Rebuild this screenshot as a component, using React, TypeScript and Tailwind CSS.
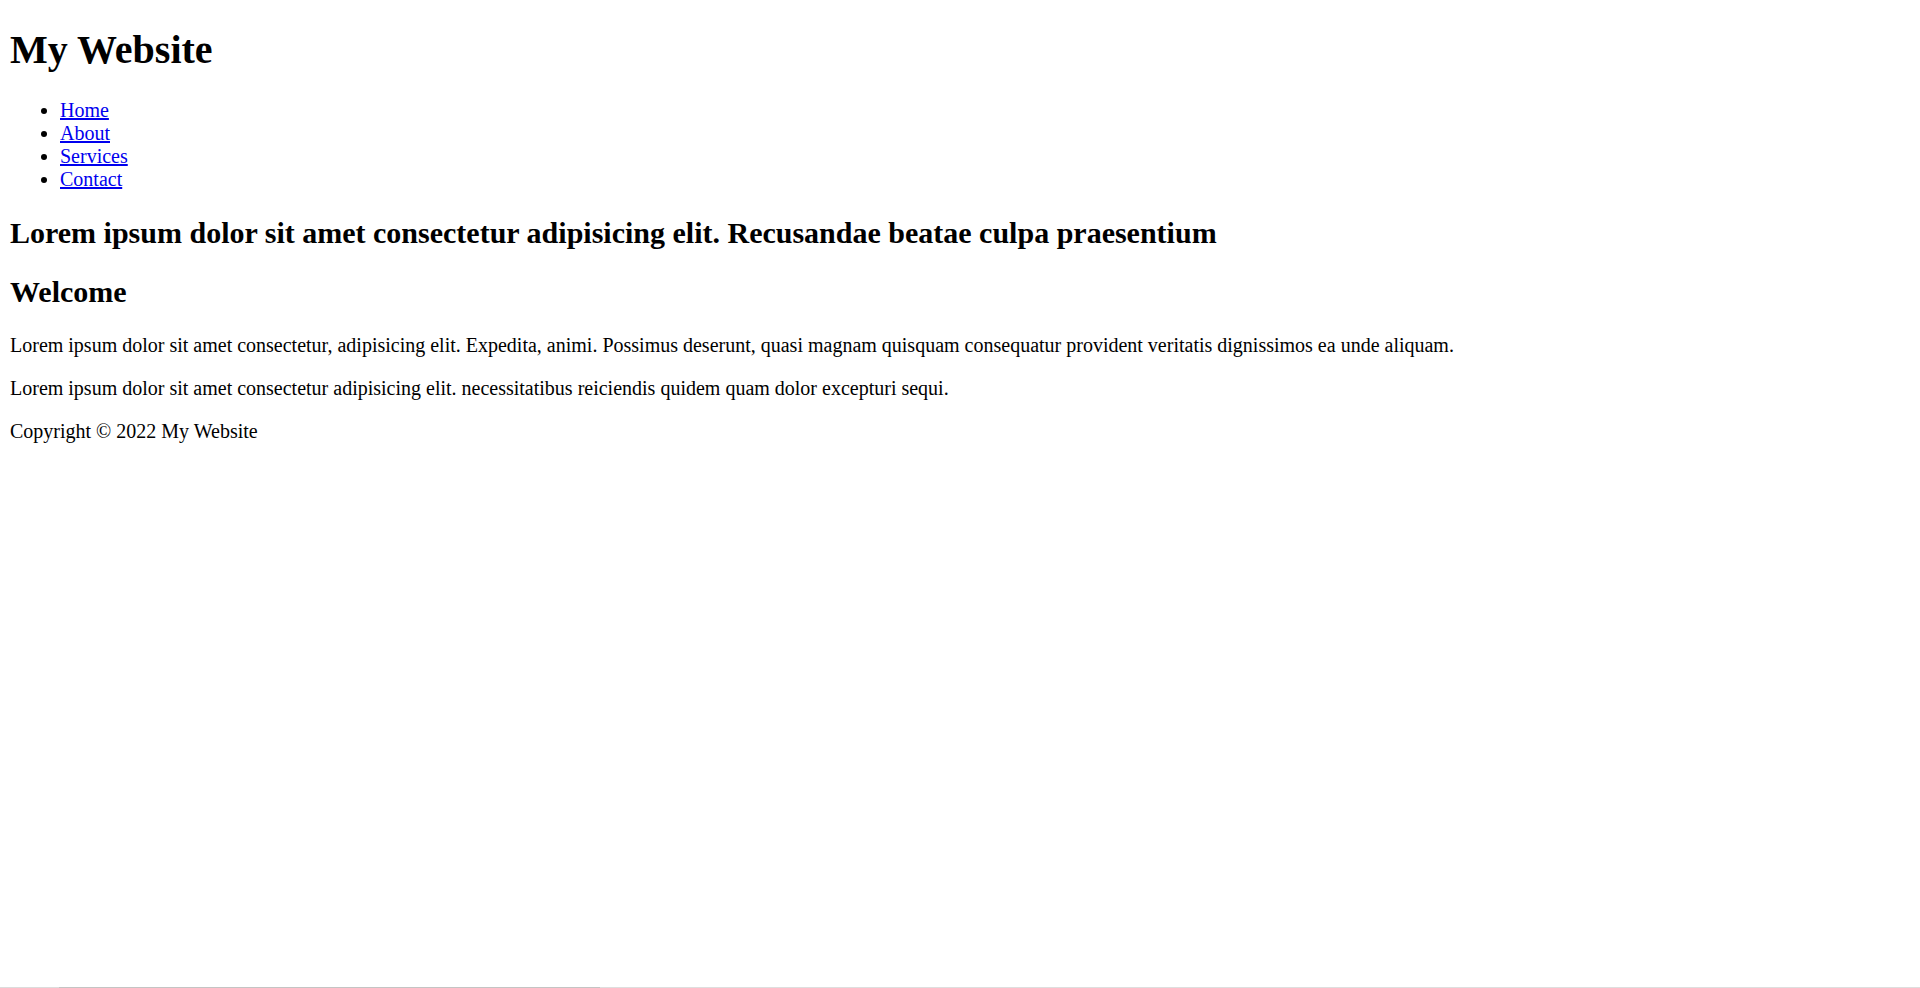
import React from 'react';

const links = ['Home', 'About', 'Services', 'Contact'];

export default function App() {
  return (
    <div className="flex min-h-[988px] flex-col bg-white font-['Liberation_Serif','Times_New_Roman',serif] text-black">
      <div className="flex-1 px-[10px]">
        <header>
          <h1 className="mt-[25.6px] mb-[0.67em] text-[40px] leading-[normal] font-bold">My Website</h1>
          <nav>
            <ul className="my-[1em] list-disc pl-[50px] text-[20px] leading-[normal]">
              {links.map((l) => (
                <li key={l}>
                  <a href="#" className="text-[#0000ee] underline">
                    {l}
                  </a>
                </li>
              ))}
            </ul>
          </nav>
        </header>
        <main>
          <h2 className="my-[0.83em] text-[30px] leading-[normal] font-bold">
            Lorem ipsum dolor sit amet consectetur adipisicing elit. Recusandae beatae culpa praesentium
          </h2>
          <section>
            <h2 className="my-[0.83em] text-[30px] leading-[normal] font-bold">Welcome</h2>
            <p className="my-[1em] text-[20px] leading-[normal]">
              Lorem ipsum dolor sit amet consectetur, adipisicing elit. Expedita, animi. Possimus deserunt, quasi magnam
              quisquam consequatur provident veritatis dignissimos ea unde aliquam.
            </p>
            <p className="my-[1em] text-[20px] leading-[normal]">
              Lorem ipsum dolor sit amet consectetur adipisicing elit. necessitatibus reiciendis quidem quam dolor
              excepturi sequi.
            </p>
          </section>
        </main>
        <footer>
          <p className="my-[1em] text-[20px] leading-[normal]">Copyright © 2022 My Website</p>
        </footer>
      </div>
      <div className="flex h-px">
        <div className="w-[59px] bg-[#dcdcdc]" />
        <div className="w-[541px] bg-[#c4c4c4]" />
        <div className="flex-1 bg-[#dedede]" />
      </div>
    </div>
  );
}
